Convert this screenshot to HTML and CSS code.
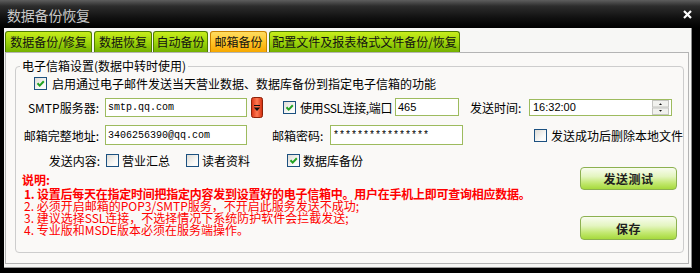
FILE: index.html
```html
<!DOCTYPE html>
<html lang="zh-CN">
<head>
    <meta charset="UTF-8">
    <title>数据备份恢复</title>
    <link rel="stylesheet" href="styles.css">
</head>
<body>
    <div class="window">
        <div class="titlebar">
            <span class="title">数据备份恢复</span>
            <span class="close">
                <svg width="9" height="9" viewBox="0 0 9 9"><path d="M1 1L8 8M8 1L1 8" stroke="#fff" stroke-width="2.2"/></svg>
            </span>
        </div>
        <div class="client">
            <div class="tabs">
                <div class="tab t1">数据备份/修复</div>
                <div class="tab t2">数据恢复</div>
                <div class="tab t3">自动备份</div>
                <div class="tab t4 active">邮箱备份</div>
                <div class="tab t5">配置文件及报表格式文件备份/恢复</div>
            </div>
            <div class="panel">
                <fieldset class="group">
                    <legend>电子信箱设置(数据中转时使用)</legend>

                    <div class="row row1">
                        <span class="cb"><svg width="11" height="11" viewBox="0 0 11 11"><path d="M2.5 5.2l2.2 2.4L8.8 3.2" fill="none" stroke="#22a322" stroke-width="2"/></svg></span>
                        <span class="txt">启用通过电子邮件发送当天营业数据、数据库备份到指定电子信箱的功能</span>
                    </div>

                    <div class="row row2">
                        <span class="lbl">SMTP服务器:</span>
                        <div class="field smtp mono">smtp.qq.com</div>
                        <span class="drop">
                            <svg width="12" height="21" viewBox="0 0 12 21">
                                <defs>
                                    <linearGradient id="rg" x1="0" x2="1" y1="0" y2="0">
                                        <stop offset="0" stop-color="#d83012"/>
                                        <stop offset="0.5" stop-color="#ff7a52"/>
                                        <stop offset="1" stop-color="#d02a0c"/>
                                    </linearGradient>
                                </defs>
                                <rect x="0.5" y="0.5" width="11" height="20" rx="2" fill="url(#rg)" stroke="#8c2208"/>
                                <path d="M3 8.5h6" stroke="#111" stroke-width="1"/>
                                <path d="M2.8 10.5h6.4L6 14z" fill="#111"/>
                            </svg>
                        </span>
                        <span class="cb ssl-cb"><svg width="11" height="11" viewBox="0 0 11 11"><path d="M2.5 5.2l2.2 2.4L8.8 3.2" fill="none" stroke="#22a322" stroke-width="2"/></svg></span>
                        <span class="ssl">使用SSL连接,端口</span>
                        <div class="field port num">465</div>
                        <span class="time-lbl">发送时间:</span>
                        <div class="field time num">
                            <span>16:32:00</span>
                            <svg width="17" height="15" viewBox="0 0 17 15">
                                <rect x="0.5" y="0.5" width="16" height="6.5" fill="#f1f1ee" stroke="#c4c4c0"/>
                                <rect x="0.5" y="8" width="16" height="6.5" fill="#f1f1ee" stroke="#c4c4c0"/>
                                <path d="M7 5h3L8.5 3.2z" fill="#111"/>
                                <path d="M7 10h3L8.5 11.8z" fill="#111"/>
                            </svg>
                        </div>
                    </div>

                    <div class="row row3">
                        <span class="lbl">邮箱完整地址:</span>
                        <div class="field addr mono">3406256390@qq.com</div>
                        <span class="pwd-lbl">邮箱密码:</span>
                        <div class="field pwd mono">****************</div>
                        <span class="cb del-cb"></span>
                        <span class="txt">发送成功后删除本地文件</span>
                    </div>

                    <div class="bottom">
                        <div class="left">
                            <div class="row row4">
                                <span class="lbl lbl4">发送内容:</span>
                                <span class="opt o1"><span class="cb"></span><span>营业汇总</span></span>
                                <span class="opt o2"><span class="cb"></span><span>读者资料</span></span>
                                <span class="opt"><span class="cb"><svg width="11" height="11" viewBox="0 0 11 11"><path d="M2.5 5.2l2.2 2.4L8.8 3.2" fill="none" stroke="#22a322" stroke-width="2"/></svg></span><span>数据库备份</span></span>
                            </div>
                            <div class="notes">
                                <div class="note-title">说明:</div>
                                <div class="note first">1. 设置后每天在指定时间把指定内容发到设置好的电子信箱中。用户在手机上即可查询相应数据。</div>
                                <div class="note">2. 必须开启邮箱的POP3/SMTP服务，不开启此服务发送不成功;</div>
                                <div class="note">3. 建议选择SSL连接，不选择情况下系统防护软件会拦截发送;</div>
                                <div class="note">4. 专业版和MSDE版本必须在服务端操作。</div>
                            </div>
                        </div>
                        <div class="right">
                            <button class="btn">发送测试</button>
                            <button class="btn save">保存</button>
                        </div>
                    </div>
                </fieldset>
            </div>
        </div>
    </div>
</body>
</html>
```

FILE: styles.css
```css
body { margin: 0; background: #000; font-family: "Noto Sans CJK SC", sans-serif; font-size: 12px; color: #000; }
.window { width: 700px; height: 273px; background: #000; overflow: hidden; }

.titlebar { height: 28px; display: flex; align-items: center; justify-content: space-between; padding: 0 8px 0 7px; box-sizing: border-box; background: linear-gradient(#5e5e5e, #2c2c2c 22%, #101010 65%, #000); }
.title { color: #c8c8c8; font-size: 14px; padding-top: 2px; letter-spacing: -0.2px; }
.close { display: flex; }

.client { width: 688px; height: 240px; margin-left: 4px; box-sizing: border-box; padding: 3px 0 0 1px; background: #f7f7f5; border-right: 1px solid #8c8c8c; border-bottom: 1px solid #9a9a9a; }

.tabs { display: flex; height: 21px; }
.tab { height: 21px; box-sizing: border-box; border: 1px solid #4f7d00; border-bottom: none; border-radius: 3px 3px 0 0; background: linear-gradient(#c8ee1c, #9ad20a 55%, #74b000); text-align: center; line-height: 19px; margin-right: 2px; white-space: nowrap; color: #111; }
.tab.active { border-color: #c98300; background: linear-gradient(#ffdc60, #ffc224 55%, #f6a800); }
.t1 { width: 87px; }
.t2 { width: 58px; margin-right: 1px; }
.t3 { width: 55px; }
.t4 { width: 57px; }
.t5 { width: 191px; }

.panel { height: 212px; margin-right: 2px; box-sizing: border-box; border: 1px solid #b4b4b4; background: #faf9f7; }

.group { box-sizing: border-box; height: 195px; margin: 5px 4px 0 9px; padding: 0; min-width: 0; border: 1px solid #cdcdcd; border-radius: 4px; }
.group legend { margin-left: 4px; padding: 0 2px; line-height: 16px; font-size: 12px; }

.row { display: flex; align-items: center; white-space: nowrap; }
.row1 { height: 18px; padding-left: 18px; }
.row1 .txt { margin-left: 5px; }
.row2 { height: 20px; margin-top: 5px; }
.row3 { height: 20px; margin-top: 8px; }
.lbl { width: 83px; margin-right: 6px; text-align: right; }

.cb { width: 13px; height: 13px; box-sizing: border-box; border: 1px solid #1c5180; background: linear-gradient(135deg, #dedcd6, #fbfbf9 70%); display: flex; align-items: center; justify-content: center; flex: none; }

.field { height: 19px; box-sizing: border-box; border: 1px solid #9dbb5e; background: #fff; padding-left: 2px; display: flex; align-items: center; flex: none; }
.mono { font-family: "Liberation Mono", monospace; font-size: 10px; }
.num { font-family: "Liberation Sans", sans-serif; font-size: 11px; }
.smtp { width: 142px; }
.drop { display: flex; margin-left: 4px; }
.ssl-cb { margin-left: 20px; }
.ssl { width: 95px; margin-left: 4px; letter-spacing: -0.4px; }
.port { width: 64px; height: 18px; }
.time-lbl { width: 59px; margin-left: 11px; }
.time { width: 143px; height: 17px; justify-content: space-between; padding: 0 2px 0 3px; }
.time svg { display: block; }

.addr { width: 142px; height: 20px; }
.pwd-lbl { width: 58px; margin-left: 25px; }
.pwd { width: 133px; height: 20px; }
.del-cb { margin-left: 71px; }
.row3 .txt { margin-left: 4px; }

.bottom { display: flex; margin-top: 6px; }
.left { flex: 1; }
.row4 { height: 18px; }
.lbl4 { width: 84px; }
.opt { display: flex; align-items: center; gap: 3px; }
.o1 { width: 80px; }
.o2 { width: 101px; }

.notes { padding-left: 6px; color: #f00; white-space: nowrap; }
.note-title { margin-top: 4px; line-height: 14px; font-weight: bold; }
.note { padding-left: 2px; line-height: 12px; }
.note.first { line-height: 13px; font-weight: bold; letter-spacing: -0.25px; }

.right { width: 97px; margin-right: 6px; padding-top: 16px; display: flex; flex-direction: column; }
.btn { height: 23px; padding: 0; border: 1px solid #8cb150; border-radius: 4px; background: linear-gradient(#f8fcef, #e4f5c0 40%, #c2e870 72%, #a6da3c); font-family: "Noto Sans CJK SC", sans-serif; font-size: 12px; font-weight: bold; color: #1e1e1e; letter-spacing: 0.5px; }
.btn.save { height: 24px; margin-top: 26px; }
```
